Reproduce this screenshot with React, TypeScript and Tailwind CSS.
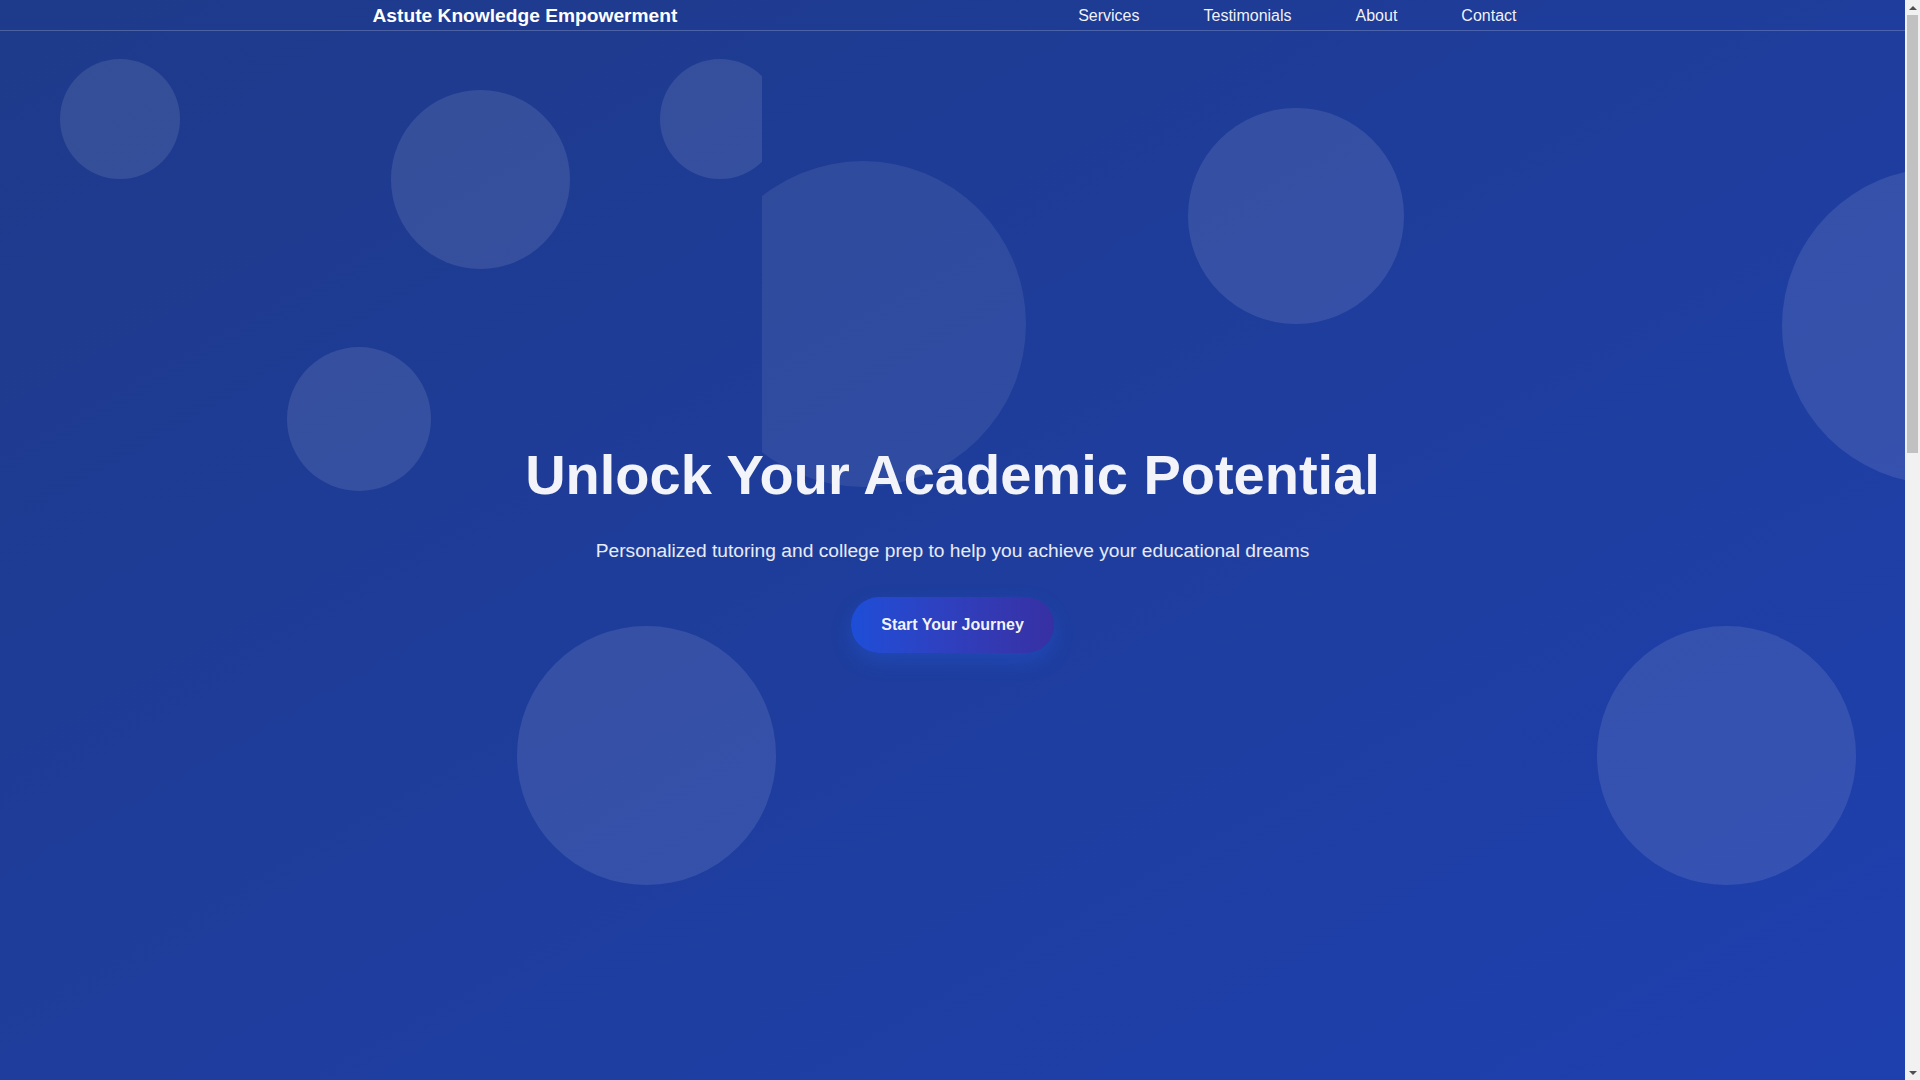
import React from 'react';

const font = { fontFamily: '"Liberation Sans", Arial, Helvetica, sans-serif' };

const links = ['Services', 'Testimonials', 'About', 'Contact'];

function Navbar() {
  return (
    <nav className="absolute top-0 left-0 right-0 z-20 h-[31px] border-b border-white/20">
      <div className="max-w-[1200px] mx-auto px-5 h-[30px] pt-[1px] flex items-center justify-between">
        <div className="text-[1.2rem] font-bold text-white leading-none">Astute Knowledge Empowerment</div>
        <ul className="flex items-center gap-8">
          {links.map((l) => (
            <li key={l}>
              <a href={`#${l.toLowerCase()}`} className="px-4 text-base text-white/95 leading-none">
                {l}
              </a>
            </li>
          ))}
        </ul>
      </div>
    </nav>
  );
}

// decorative background circles
function Circle({ className }: { className: string }) {
  return <div className={`absolute rounded-full bg-white/10 ${className}`} />;
}

function Hero() {
  return (
    <section className="relative h-screen shrink-0 overflow-hidden bg-gradient-to-br from-[#1e3a8a] to-[#1e40af] pt-[6px] flex items-center justify-center">
      <div className="absolute inset-0 pointer-events-none">
        <Circle className="left-[60px] top-[59px] w-[120px] h-[120px]" />
        <Circle className="left-[391px] top-[90px] w-[179px] h-[179px]" />
        <div className="absolute left-0 top-0 w-[762px] h-full overflow-hidden">
          <Circle className="left-[660px] top-[59px] w-[120px] h-[120px]" />
        </div>
        <div className="absolute left-[762px] top-0 right-0 h-full overflow-hidden">
          <Circle className="left-[-62px] top-[161px] w-[326px] h-[326px] bg-white/[0.08]" />
        </div>
        <Circle className="left-[1188px] top-[108px] w-[216px] h-[216px]" />
        <Circle className="left-[1782px] top-[168px] w-[316px] h-[316px]" />
        <Circle className="left-[287px] top-[347px] w-[144px] h-[144px]" />
        <Circle className="left-[517px] top-[626px] w-[259px] h-[259px]" />
        <Circle className="left-[1597px] top-[626px] w-[259px] h-[259px]" />
      </div>

      <Navbar />

      <div className="relative z-10 text-center">
        <h1 className="text-[3.5rem] leading-[1.5] font-bold text-[#f3f4f9] mb-5">
          Unlock Your Academic Potential
        </h1>
        <p className="text-[1.2rem] leading-[1.5] text-white/90 mb-8">
          Personalized tutoring and college prep to help you achieve your educational dreams
        </p>
        <a
          href="#contact"
          className="inline-block rounded-full bg-gradient-to-r from-[#1d4ed8] to-[#3730a3] px-[30px] py-4 text-base leading-6 font-bold text-white/95 shadow-[0_8px_20px_rgba(37,99,235,0.3)]"
        >
          Start Your Journey
        </a>
      </div>
    </section>
  );
}

function Scrollbar() {
  return (
    <aside className="w-[15px] shrink-0 h-screen bg-[#f1f1f1] flex flex-col">
      <div className="h-[15px] flex items-center justify-center">
        <div className="w-0 h-0 border-l-[4px] border-r-[4px] border-b-[4px] border-l-transparent border-r-transparent border-b-[#505050]" />
      </div>
      <div className="h-[438px] mx-[2px] bg-[#c1c1c1]" />
      <div className="flex-1" />
      <div className="h-[15px] flex items-center justify-center">
        <div className="w-0 h-0 border-l-[4px] border-r-[4px] border-t-[4px] border-l-transparent border-r-transparent border-t-[#505050]" />
      </div>
    </aside>
  );
}

export default function App() {
  return (
    <div style={font} className="flex h-screen overflow-hidden text-slate-800">
      <main className="flex-1 h-screen overflow-hidden flex flex-col">
        <Hero />
      </main>
      <Scrollbar />
    </div>
  );
}
